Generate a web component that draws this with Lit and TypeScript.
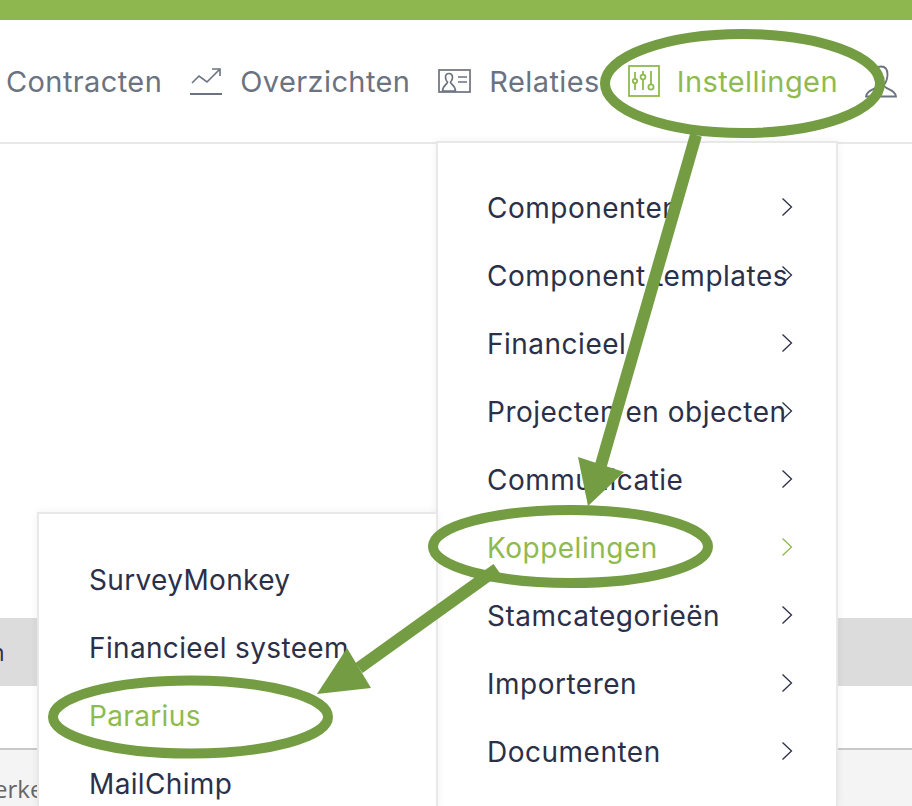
import { LitElement, css, html, svg } from "lit";
import { customElement } from "lit/decorators.js";

const MAIN_ITEMS = [
  "Componenten",
  "Component templates",
  "Financieel",
  "Projecten en objecten",
  "Communicatie",
  "Koppelingen",
  "Stamcategorieën",
  "Importeren",
  "Documenten",
];
const SUB_ITEMS = ["SurveyMonkey", "Financieel systeem", "Pararius", "MailChimp"];

const trendIcon = html`<svg class="icon" width="32" height="28" viewBox="0 0 32 28" fill="none" stroke="currentColor">
  <path stroke-width="1.6" d="M2 16 L9 9 L17 15 L29 3 M22 2 H30 V9" />
  <path stroke-width="2" d="M0 27 H32" />
</svg>`;

const cardIcon = html`<svg class="icon" width="33" height="24" viewBox="0 0 33 24" fill="none" stroke="currentColor" stroke-width="1.7">
  <rect x="1" y="1" width="31" height="22" />
  <path d="M11 4.5 C8.5 4.5 7.5 6.5 7.5 8.5 C7.5 10.5 8.5 12 9.5 13 C9.5 15.5 5 15.5 4.5 22 H17.5 C17 15.5 12.5 15.5 12.5 13 C13.5 12 14.5 10.5 14.5 8.5 C14.5 6.5 13.5 4.5 11 4.5 Z" />
  <path d="M20 8 H29 M20 13 H29" />
</svg>`;

const slidersIcon = html`<svg class="icon" width="32" height="32" viewBox="0 0 32 32" fill="none" stroke="currentColor" stroke-width="1.8">
  <rect x="1" y="1" width="30" height="30" />
  <path d="M7 7 V14 M7 18 V25 M15 6 V9.5 M15 14.5 V25 M23 6 V19.5" />
  <circle cx="7" cy="16" r="2.2" />
  <circle cx="15" cy="12" r="2.4" />
  <circle cx="23" cy="22" r="2.6" />
</svg>`;

const userIcon = html`<svg class="icon" width="32" height="33" viewBox="0 0 32 33" fill="none" stroke="currentColor" stroke-width="1.8" stroke-linecap="round">
  <path d="M16 1.5 C11.5 1.5 9.5 5 9.5 9.5 C9.5 14 11.5 18 13 20 C13 23 7 24 3.5 27 C2 28.5 1 30 1 31.5 H31 C31 30 30 28.5 28.5 27 C25 24 19 23 19 20 C20.5 18 22.5 14 22.5 9.5 C22.5 5 20.5 1.5 16 1.5 Z" />
</svg>`;

const chevron = html`<svg class="chevron" width="12" height="20" viewBox="0 0 12 20" fill="none" stroke="currentColor" stroke-width="1.3">
  <path d="M1.5 1.5 L10.5 10 L1.5 18.5" />
</svg>`;

// de groene markeringen die over het scherm getekend zijn
const annotations = svg`
  <ellipse cx="742.5" cy="83.5" rx="137.5" ry="49.5" />
  <ellipse cx="570.5" cy="546.5" rx="137.5" ry="36.5" />
  <ellipse cx="190.5" cy="717" rx="137.5" ry="36.5" />
  <path d="M696 135 L601 465" />
  <polygon class="head" points="578,457 624,472 588,506" />
  <path d="M497 569 L359 668" />
  <polygon class="head" points="347,648 371,688 317,694" />
`;

@customElement("app-root")
export class AppRoot extends LitElement {
  static styles = css`
    :host {
      display: block;
      position: relative;
      height: 806px;
      overflow: hidden;
      background: #fff;
      font-family: Inter, "Liberation Sans", sans-serif;
      font-size: 28px;
    }

    .topbar {
      height: 20px;
      background: #8fb74f;
    }

    .nav {
      display: flex;
      align-items: center;
      gap: 28px;
      height: 124px;
      padding-left: 6px;
      box-sizing: border-box;
      border-bottom: 2px solid #e8e8e8;
      color: #6b7280;
      font-size: 29px;
      letter-spacing: 0.4px;
      white-space: nowrap;
    }

    .nav-item {
      display: flex;
      align-items: center;
      gap: 18px;
    }

    .nav-item.active {
      gap: 17px;
      color: #8fba4f;
    }

    .nav-item.user {
      margin-left: -1px;
    }

    .icon {
      flex: none;
      display: block;
    }

    .content {
      display: flex;
      flex-direction: column;
      height: 662px;
    }

    .band {
      margin-top: 474px;
      height: 68px;
      line-height: 68px;
      background: #dcdcdc;
      color: #333;
      font-family: "Open Sans", sans-serif;
      font-size: 24px;
      text-indent: -10px;
    }

    .footer {
      flex: 1;
      margin-top: 62px;
      border-top: 2px solid #c9c9c9;
      background: #f4f4f4;
      color: #666;
      font-family: "Open Sans", sans-serif;
      font-size: 24px;
      padding-top: 22px;
      text-indent: -6px;
      white-space: nowrap;
    }

    .menu {
      position: absolute;
      box-sizing: border-box;
      width: 402px;
      background: #fff;
      border: 2px solid #e8e8e8;
      border-bottom: 0;
      box-shadow: 0 0 8px rgba(0, 0, 0, 0.06);
      color: #2b3048;
      letter-spacing: 0.5px;
    }

    .menu.main {
      left: 436px;
      top: 141px;
      height: 665px;
      padding-top: 31px;
    }

    .menu.sub {
      left: 37px;
      top: 512px;
      width: 401px;
      height: 294px;
      padding-top: 32px;
      letter-spacing: 0.35px;
    }

    .row {
      display: flex;
      align-items: center;
      height: 68px;
      padding-left: 49px;
      white-space: nowrap;
      position: relative;
    }

    .menu.sub .row {
      padding-left: 50px;
    }

    .row.active {
      color: #8fba4f;
    }

    .chevron {
      position: absolute;
      left: 343px;
      top: 23px;
    }

    .marks {
      position: absolute;
      left: 0;
      top: 0;
    }

    .marks ellipse,
    .marks path {
      fill: none;
      stroke: #739c43;
      stroke-width: 10;
    }

    .marks path {
      stroke-width: 12;
    }

    .marks .head {
      fill: #739c43;
    }
  `;

  render() {
    return html`
      <div class="topbar"></div>
      <nav class="nav">
        <div class="nav-item">Contracten</div>
        <div class="nav-item">${trendIcon}Overzichten</div>
        <div class="nav-item">${cardIcon}Relaties</div>
        <div class="nav-item active">${slidersIcon}Instellingen</div>
        <div class="nav-item user">${userIcon}</div>
      </nav>
      <div class="content">
        <div class="band">n</div>
        <div class="footer">erken</div>
      </div>
      <div class="menu main">
        ${MAIN_ITEMS.map(
          (item) => html`<div class="row ${item === "Koppelingen" ? "active" : ""}">${item}${chevron}</div>`
        )}
      </div>
      <div class="menu sub">
        ${SUB_ITEMS.map(
          (item) => html`<div class="row ${item === "Pararius" ? "active" : ""}">${item}</div>`
        )}
      </div>
      <svg class="marks" width="912" height="806" viewBox="0 0 912 806">${annotations}</svg>
    `;
  }
}
